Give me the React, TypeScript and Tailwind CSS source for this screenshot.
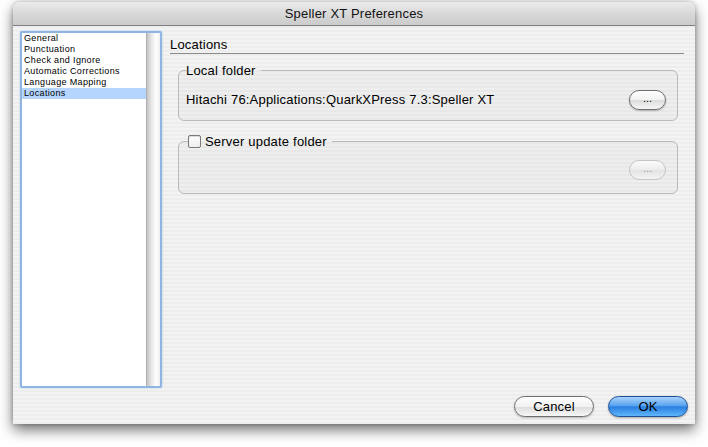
import React from 'react';

const font = 'font-["Lucida_Grande","Liberation_Sans",sans-serif]';

const items = ['General', 'Punctuation', 'Check and Ignore', 'Automatic Corrections', 'Language Mapping', 'Locations'];

function PillButton({ children, disabled = false, className = '' }: { children: React.ReactNode; disabled?: boolean; className?: string }) {
  return (
    <button
      className={`flex items-center justify-center rounded-full border ${
        disabled
          ? 'border-[#c4c4c4] text-[#a0a0a0] bg-[linear-gradient(#fbfbfb,#ececec_50%,#e2e2e2_51%,#f4f4f4)]'
          : 'border-[#6e6e6e] text-black bg-[linear-gradient(#ffffff,#f1f1f1_50%,#dcdcdc_51%,#f7f7f7)] shadow-[0_1px_2px_rgba(0,0,0,0.25)]'
      } ${className}`}
    >
      {children}
    </button>
  );
}

export default function App() {
  return (
    <div className={`w-[708px] h-[447px] bg-white pt-[2px] pl-[13px] ${font}`}>
      <div className="w-[682px] h-[422px] flex flex-col rounded-t-[7px] overflow-hidden shadow-[0_6px_14px_rgba(0,0,0,0.55),0_0_4px_rgba(0,0,0,0.25)]">
        <div className="h-[24px] shrink-0 flex items-center justify-center border-b border-[#7f7f7f] bg-[linear-gradient(#ebebeb,#d9d9d9_50%,#cbcbcb)] text-[13px] tracking-[0.2px] text-[#111]">
          Speller XT Preferences
        </div>
        <div className="flex-1 flex bg-[repeating-linear-gradient(180deg,#ededed_0px,#ededed_2px,#f3f3f3_2px,#f3f3f3_4px)]">
          <div className="ml-[7px] mt-[5px] w-[142px] h-[357px] rounded-[2px] border-[2px] border-[#8fb5e0] shadow-[0_0_2px_#a8c8ec] flex bg-white">
            <div className="flex-1 text-[9px] leading-[11px] tracking-[0.35px] text-black">
              {items.map((it) => (
                <div key={it} className={`pl-[2px] h-[11px] ${it === 'Locations' ? 'bg-[#b5d5ff]' : ''}`}>
                  {it}
                </div>
              ))}
            </div>
            <div className="w-[14px] bg-[linear-gradient(90deg,#c4c4c4,#e8e8e8_35%,#ffffff_70%,#eeeeee)] border-l border-[#b0b0b0]" />
          </div>
          <div className="flex-1 flex flex-col ml-[8px] pr-[7px]">
            <div className="mt-[11px] mr-[4px] text-[13px] leading-[16px] tracking-[0.2px] text-black border-b border-[#8a8a8a]">
              Locations
            </div>
            <fieldset className="mt-[9px] ml-[8px] mr-[10px] h-[58px] rounded-[6px] border border-[#b9b9b9] bg-[rgba(0,0,0,0.02)] pl-[7px] pr-[11px]">
              <legend className="pr-[5px] text-[13px] leading-[15px] tracking-[0.2px] text-black">Local folder</legend>
              <div className="flex items-center justify-between mt-[12px]">
                <span className="text-[13px] tracking-[0.2px] text-black">Hitachi 76:Applications:QuarkXPress 7.3:Speller XT</span>
                <PillButton className="w-[37px] h-[20px] text-[11px] leading-[11px] pb-[3px]">...</PillButton>
              </div>
            </fieldset>
            <fieldset className="mt-[13px] ml-[8px] mr-[10px] h-[60px] rounded-[6px] border border-[#b9b9b9] bg-[rgba(0,0,0,0.02)] pl-[9px] pr-[11px]">
              <legend className="pr-[5px] text-[13px] leading-[15px] tracking-[0.2px] text-black flex items-center gap-[4px]">
                <span className="w-[13px] h-[13px] rounded-[2px] border border-[#7a7a7a] bg-[linear-gradient(#ffffff,#ededed)] shadow-[inset_0_1px_1px_rgba(0,0,0,0.15)]" />
                Server update folder
              </legend>
              <div className="flex justify-end mt-[11px]">
                <PillButton disabled className="w-[37px] h-[20px] text-[11px] leading-[11px] pb-[3px]">...</PillButton>
              </div>
            </fieldset>
            <div className="mt-auto mb-[7px] flex justify-end gap-[14px]">
              <PillButton className="w-[80px] h-[21px] text-[13px] tracking-[0.2px]">Cancel</PillButton>
              <button className="w-[80px] h-[21px] rounded-full border border-[#1d4f94] text-[13px] text-black flex items-center justify-center bg-[linear-gradient(#a9d2fb,#5aa4ef_45%,#2a7fe0_52%,#5fb6fb)] shadow-[0_1px_2px_rgba(0,0,0,0.3)]">
                OK
              </button>
            </div>
          </div>
        </div>
      </div>
    </div>
  );
}
